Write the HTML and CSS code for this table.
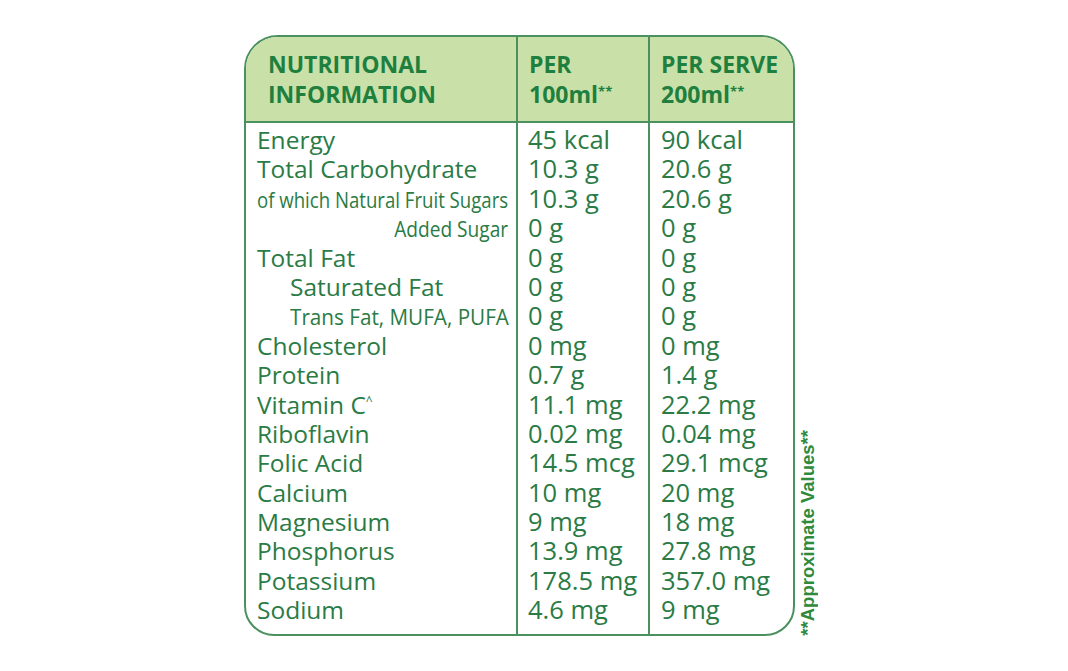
FILE: index.html
```html
<!DOCTYPE html>
<html>
<head>
<meta charset="utf-8">
<link rel="stylesheet" href="styles.css">
</head>
<body>
<div class="page">
  <div class="panel">
    <div class="head">
      <div class="hcell c1">NUTRITIONAL<br>INFORMATION</div>
      <div class="hcell c2">PER<br>100ml<sup>**</sup></div>
      <div class="hcell c3">PER SERVE<br>200ml<sup>**</sup></div>
    </div>
    <div class="body">
      <div class="col c1">
        <div class="r">Energy</div>
        <div class="r">Total Carbohydrate</div>
        <div class="r cond which"><span>of which Natural Fruit Sugars</span></div>
        <div class="r cond added right"><span>Added Sugar</span></div>
        <div class="r">Total Fat</div>
        <div class="r ind">Saturated Fat</div>
        <div class="r cond trans ind"><span>Trans Fat, MUFA, PUFA</span></div>
        <div class="r">Cholesterol</div>
        <div class="r">Protein</div>
        <div class="r">Vitamin C<sup class="caret">^</sup></div>
        <div class="r">Riboflavin</div>
        <div class="r">Folic Acid</div>
        <div class="r">Calcium</div>
        <div class="r">Magnesium</div>
        <div class="r">Phosphorus</div>
        <div class="r">Potassium</div>
        <div class="r">Sodium</div>
      </div>
      <div class="col c2">
        <div class="r">45 kcal</div>
        <div class="r">10.3 g</div>
        <div class="r">10.3 g</div>
        <div class="r">0 g</div>
        <div class="r">0 g</div>
        <div class="r">0 g</div>
        <div class="r">0 g</div>
        <div class="r">0 mg</div>
        <div class="r">0.7 g</div>
        <div class="r">11.1 mg</div>
        <div class="r">0.02 mg</div>
        <div class="r">14.5 mcg</div>
        <div class="r">10 mg</div>
        <div class="r">9 mg</div>
        <div class="r">13.9 mg</div>
        <div class="r">178.5 mg</div>
        <div class="r">4.6 mg</div>
      </div>
      <div class="col c3">
        <div class="r">90 kcal</div>
        <div class="r">20.6 g</div>
        <div class="r">20.6 g</div>
        <div class="r">0 g</div>
        <div class="r">0 g</div>
        <div class="r">0 g</div>
        <div class="r">0 g</div>
        <div class="r">0 mg</div>
        <div class="r">1.4 g</div>
        <div class="r">22.2 mg</div>
        <div class="r">0.04 mg</div>
        <div class="r">29.1 mcg</div>
        <div class="r">20 mg</div>
        <div class="r">18 mg</div>
        <div class="r">27.8 mg</div>
        <div class="r">357.0 mg</div>
        <div class="r">9 mg</div>
      </div>
    </div>
  </div>
  <div class="note">**Approximate Values**</div>
</div>
</body>
</html>
```
FILE: styles.css
```css
html, body {
  margin: 0;
  padding: 0;
  background: #ffffff;
}
.page {
  display: flex;
  align-items: flex-end;
  padding: 35px 0 0 244px;
}
.panel {
  width: 547px;
  height: 597px;
  border: 2px solid #4b9160;
  border-radius: 34px 34px 30px 30px;
  overflow: hidden;
  font-family: "Open Sans", sans-serif;
  color: #2a7b45;
  display: flex;
  flex-direction: column;
}
.head {
  display: grid;
  grid-template-columns: 272px 132px 143px;
  height: 84px;
  background: #c9e1a8;
  border-bottom: 2px solid #4b9160;
}
.hcell {
  font-weight: 700;
  font-size: 23px;
  line-height: 30px;
  color: #1f7f3f;
  padding-top: 12px;
  box-sizing: border-box;
  white-space: nowrap;
}
.hcell sup {
  font-size: 13px;
  vertical-align: 7px;
  line-height: 0;
}
.head .c1 { padding-left: 22px; border-right: 2px solid #4b9160; }
.head .c2 { padding-left: 11px; border-right: 2px solid #4b9160; }
.head .c3 { padding-left: 11px; }
.body {
  flex: 1;
  display: grid;
  grid-template-columns: 272px 132px 143px;
}
.col {
  padding-top: 2px;
  box-sizing: border-box;
}
.body .c1 { padding-left: 11px; padding-right: 8px; border-right: 2px solid #4b9160; }
.body .c2 { padding-left: 10px; border-right: 2px solid #4b9160; }
.body .c3 { padding-left: 11px; }
.r {
  height: 29.4px;
  line-height: 29.4px;
  font-size: 24.5px;
  white-space: nowrap;
}
.body .c2 .r, .body .c3 .r { font-size: 25.5px; }
.r.ind { padding-left: 33px; }
.r.cond span {
  display: inline-block;
  transform-origin: left center;
}
.r.which span { font-size: 21px; transform: scaleX(0.886); }
.r.added span { font-size: 21px; transform: scaleX(0.91); }
.r.trans span { font-size: 22px; transform: scaleX(0.94); }
.r.cond.right { text-align: right; }
.r.cond.right span { transform-origin: right center; }
.caret {
  font-size: 12px;
  vertical-align: 9px;
  line-height: 0;
}
.note {
  writing-mode: vertical-rl;
  transform: rotate(180deg);
  font-family: "Liberation Sans", sans-serif;
  font-weight: 700;
  font-size: 18.5px;
  color: #2f8a3c;
  margin-left: 2px;
  margin-bottom: 0;
}
```
